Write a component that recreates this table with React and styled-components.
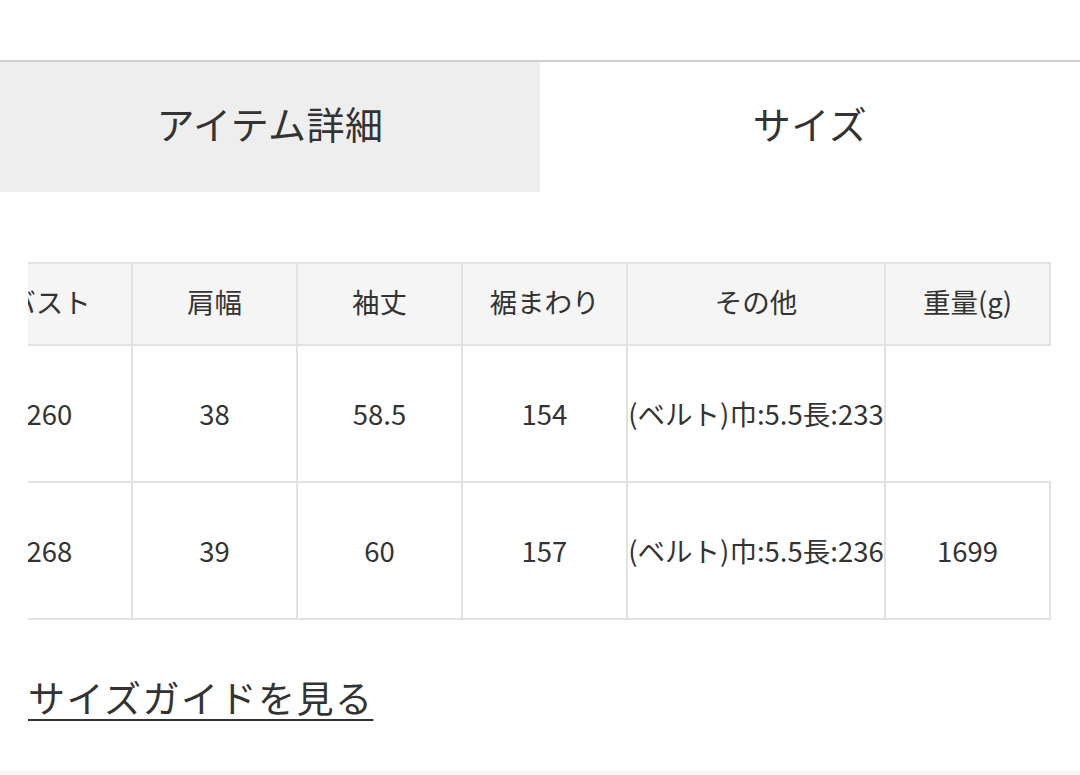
import React from "react";
import styled, { createGlobalStyle } from "styled-components";

const GlobalStyle = createGlobalStyle`
  html, body {
    margin: 0;
    padding: 0;
    background: #fff;
    font-family: "Noto Sans CJK JP", "Noto Sans", sans-serif;
    color: #333;
  }
`;

const headers = ["バスト", "肩幅", "袖丈", "裾まわり", "その他", "重量(g)"];
const rows = [
  ["260", "38", "58.5", "154", "(ベルト)巾:5.5長:233", ""],
  ["268", "39", "60", "157", "(ベルト)巾:5.5長:236", "1699"],
];
const colWidths = [165, 165, 165, 165, 258, 165];

const App = () => {
  return (
    <Page>
      <GlobalStyle />
      <TopSpace />
      <Tabs>
        <Tab>アイテム詳細</Tab>
        <Tab active>サイズ</Tab>
      </Tabs>

      <TableScroll>
        <SizeTable>
          <colgroup>
            {colWidths.map((w, i) => (
              <col key={i} style={{ width: w }} />
            ))}
          </colgroup>
          <thead>
            <tr>
              {headers.map((h) => (
                <Th key={h}>{h}</Th>
              ))}
            </tr>
          </thead>
          <tbody>
            {rows.map((row, ri) => (
              <tr key={ri}>
                {row.map((cell, ci) => (
                  <Td key={ci} empty={cell === ""}>
                    {cell}
                  </Td>
                ))}
              </tr>
            ))}
          </tbody>
        </SizeTable>
      </TableScroll>

      <GuideLink href="#">サイズガイドを見る</GuideLink>
      <Footer />
    </Page>
  );
};

const Page = styled.div`
  width: 1080px;
  min-height: 775px;
  overflow: hidden;
  display: flex;
  flex-direction: column;
`;

const TopSpace = styled.div`
  height: 60px;
  border-bottom: 2px solid #cfcfcf;
`;

const Tabs = styled.div`
  display: grid;
  grid-template-columns: 540px 540px;
  height: 130px;
`;

const Tab = styled.div`
  display: flex;
  align-items: center;
  justify-content: center;
  font-size: 38px;
  letter-spacing: 0.5px;
  color: #333;
  background: ${(p) => (p.active ? "#fff" : "#eeeeee")};
  padding-bottom: 10px;
`;

const TableScroll = styled.div`
  margin: 70px 0 0 28px;
  overflow: hidden;
`;

const SizeTable = styled.table`
  margin-left: -62px;
  border-collapse: collapse;
  table-layout: fixed;
  width: 1085px;
  font-size: 27.5px;
  color: #333;
`;

const Th = styled.th`
  height: 74px;
  padding: 0 0 6px;
  font-weight: 400;
  background: #f5f5f5;
  border: 2px solid #e2e2e2;
  text-align: center;
  vertical-align: middle;
  white-space: nowrap;
`;

const Td = styled.td`
  height: 133px;
  padding: 0 0 2px;
  text-align: center;
  vertical-align: middle;
  white-space: nowrap;
  overflow: visible;
  border: 2px solid #e2e2e2;
  ${(p) =>
    p.empty &&
    `
    border-right-color: transparent;
    border-top-color: transparent;
  `}
`;

const GuideLink = styled.a`
  align-self: flex-start;
  margin: 55px 0 0 28px;
  font-size: 37px;
  letter-spacing: 1.5px;
  line-height: 1.2;
  color: #333;
  text-decoration: underline;
  text-decoration-thickness: 2px;
  text-underline-offset: 6px;
`;

const Footer = styled.div`
  margin-top: auto;
  height: 4px;
  background: #f5f5f5;
`;

export default App;
